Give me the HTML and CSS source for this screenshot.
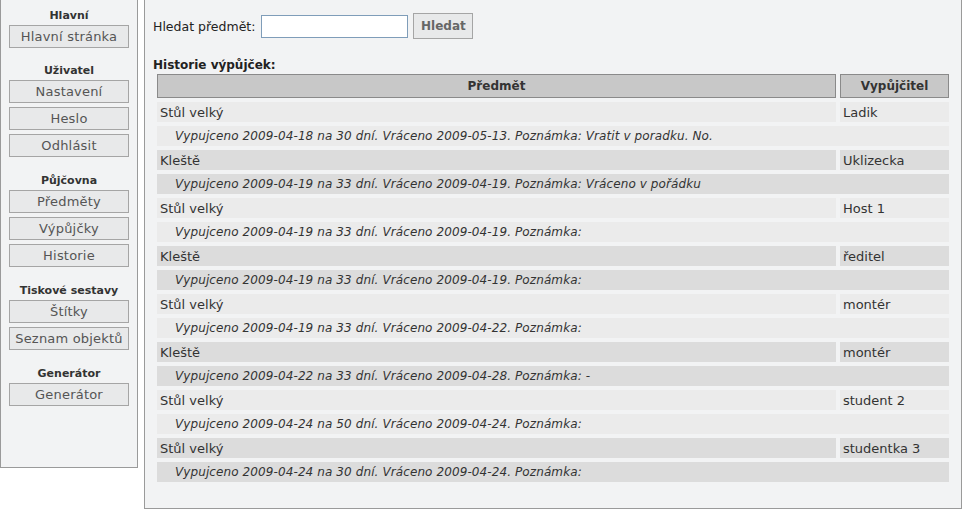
FILE: index.html
```html
<!DOCTYPE html>
<html lang="cs">
<head>
  <meta charset="UTF-8" />
  <title>Historie výpůjček</title>
  <link rel="stylesheet" href="styles.css">
</head>
<body>
  <div class="page">
    <div class="menu">
      <div class="menu-section">
        <div class="menu-title">Hlavní</div>
        <a class="menu-btn" href="#">Hlavní stránka</a>
      </div>
      <div class="menu-section">
        <div class="menu-title">Uživatel</div>
        <a class="menu-btn" href="#">Nastavení</a>
        <a class="menu-btn" href="#">Heslo</a>
        <a class="menu-btn" href="#">Odhlásit</a>
      </div>
      <div class="menu-section">
        <div class="menu-title">Půjčovna</div>
        <a class="menu-btn" href="#">Předměty</a>
        <a class="menu-btn" href="#">Výpůjčky</a>
        <a class="menu-btn" href="#">Historie</a>
      </div>
      <div class="menu-section">
        <div class="menu-title">Tiskové sestavy</div>
        <a class="menu-btn" href="#">Štítky</a>
        <a class="menu-btn" href="#">Seznam objektů</a>
      </div>
      <div class="menu-section">
        <div class="menu-title">Generátor</div>
        <a class="menu-btn" href="#">Generátor</a>
      </div>
    </div>

    <div class="content">
      <form class="search">
        <label for="q">Hledat předmět:</label>
        <input type="text" id="q" class="search-input" />
        <button type="button" class="search-btn">Hledat</button>
      </form>

      <h3 class="history-title">Historie výpůjček:</h3>
      <table class="history">
        <tr>
          <th class="col-item">Předmět</th>
          <th class="col-user">Vypůjčitel</th>
        </tr>
        <tr class="light">
          <td>Stůl velký</td><td>Ladik</td>
        </tr>
        <tr class="light">
          <td colspan="2" class="note">Vypujceno 2009-04-18 na 30 dní. Vráceno 2009-05-13. Poznámka: Vratit v poradku. No.</td>
        </tr>
        <tr class="dark">
          <td>Kleště</td><td>Uklizecka</td>
        </tr>
        <tr class="dark">
          <td colspan="2" class="note">Vypujceno 2009-04-19 na 33 dní. Vráceno 2009-04-19. Poznámka: Vráceno v pořádku</td>
        </tr>
        <tr class="light">
          <td>Stůl velký</td><td>Host 1</td>
        </tr>
        <tr class="light">
          <td colspan="2" class="note">Vypujceno 2009-04-19 na 33 dní. Vráceno 2009-04-19. Poznámka:</td>
        </tr>
        <tr class="dark">
          <td>Kleště</td><td>ředitel</td>
        </tr>
        <tr class="dark">
          <td colspan="2" class="note">Vypujceno 2009-04-19 na 33 dní. Vráceno 2009-04-19. Poznámka:</td>
        </tr>
        <tr class="light">
          <td>Stůl velký</td><td>montér</td>
        </tr>
        <tr class="light">
          <td colspan="2" class="note">Vypujceno 2009-04-19 na 33 dní. Vráceno 2009-04-22. Poznámka:</td>
        </tr>
        <tr class="dark">
          <td>Kleště</td><td>montér</td>
        </tr>
        <tr class="dark">
          <td colspan="2" class="note">Vypujceno 2009-04-22 na 33 dní. Vráceno 2009-04-28. Poznámka: -</td>
        </tr>
        <tr class="light">
          <td>Stůl velký</td><td>student 2</td>
        </tr>
        <tr class="light">
          <td colspan="2" class="note">Vypujceno 2009-04-24 na 50 dní. Vráceno 2009-04-24. Poznámka:</td>
        </tr>
        <tr class="dark">
          <td>Stůl velký</td><td>studentka 3</td>
        </tr>
        <tr class="dark">
          <td colspan="2" class="note">Vypujceno 2009-04-24 na 30 dní. Vráceno 2009-04-24. Poznámka:</td>
        </tr>
      </table>
    </div>
  </div>
</body>
</html>
```

FILE: styles.css
```css
body {
  margin: 0;
  background: #fff;
  font-family: "DejaVu Sans", Verdana, sans-serif;
  font-size: 12px;
  color: #222;
}

.page {
  display: flex;
  align-items: flex-start;
  gap: 6px;
}

/* levé menu */
.menu {
  width: 120px;
  height: 458px;
  padding: 9px 8px 0;
  background: #f2f3f4;
  border: 1px solid #9a9a9a;
  border-top: none;
  flex-shrink: 0;
}

.menu-section {
  display: flex;
  flex-direction: column;
  gap: 4px;
  margin-bottom: 17px;
}

.menu-section:first-child {
  margin-bottom: 16px;
}

.menu-title {
  font-size: 11px;
  font-weight: bold;
  line-height: 14px;
  color: #333;
  text-align: center;
  margin-bottom: -2px;
}

.menu-btn {
  display: block;
  height: 21px;
  line-height: 21px;
  text-align: center;
  background: #e8e9ea;
  border: 1px solid #a5a5a5;
  color: #555;
  font-size: 13px;
  letter-spacing: 0.2px;
  text-decoration: none;
}

/* obsah */
.content {
  flex: 1;
  height: 495px;
  padding: 13px 8px 0;
  background: #f2f3f4;
  border: 1px solid #9a9a9a;
  border-top: none;
}

.search {
  display: flex;
  align-items: center;
  gap: 5px;
  margin: 0;
}

.search label {
  font-size: 12.5px;
  color: #222;
}

.search-input {
  width: 141px;
  height: 21px;
  margin: 0 0 0 1px;
  padding: 0 2px;
  border: 1px solid #7f9db9;
  background: #fff;
  font: inherit;
}

.search-btn {
  width: 60px;
  height: 26px;
  padding: 0;
  background: #e8e9ea;
  border: 1px solid #a5a5a5;
  color: #666;
  font-family: inherit;
  font-size: 12px;
  font-weight: bold;
}

.history-title {
  margin: 18px 0 0;
  font-size: 12px;
  font-weight: bold;
  line-height: 16px;
}

.history {
  width: 100%;
  border-spacing: 4px;
  margin-top: -3px;
}

.history th {
  height: 22px;
  padding: 0;
  background: #c8c8c8;
  border: 1px solid #8a8a8a;
  font-weight: bold;
  color: #333;
}

.history .col-user {
  width: 107px;
}

.history td {
  height: 20px;
  padding: 0 3px;
  font-size: 13px;
  color: #333;
}

.history tr.light td {
  background: #ebebeb;
}

.history tr.dark td {
  background: #dcdcdc;
}

.history td.note {
  padding-left: 18px;
  font-style: italic;
  font-size: 12px;
  letter-spacing: 0.1px;
}
```
